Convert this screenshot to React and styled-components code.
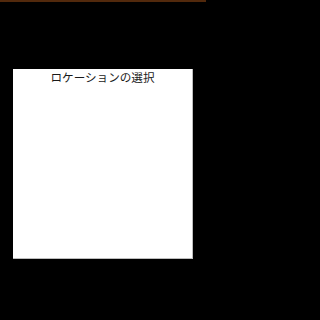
import React from 'react';
import styled, { createGlobalStyle } from 'styled-components';

const GlobalStyle = createGlobalStyle`
  html, body {
    margin: 0;
    padding: 0;
    background: #000;
  }
`;

const Screen = styled.div`
  display: flex;
  flex-direction: column;
  width: 206px;
  height: 320px;
  background: #000;
  overflow: hidden;
`;

const StatusStrip = styled.div`
  height: 2px;
  background: #52290c;
`;

const Backdrop = styled.div`
  flex: 1;
  display: flex;
  justify-content: center;
  padding-top: 67px;
`;

const Dialog = styled.div`
  box-sizing: border-box;
  width: 180px;
  height: 190px;
  background: #fff;
  border-right: 1px solid #bdbdbd;
  border-bottom: 1px solid #bdbdbd;
`;

const Title = styled.div`
  padding-top: 1px;
  text-align: center;
  font-family: "Noto Sans CJK JP", "Noto Sans", sans-serif;
  font-size: 11.6px;
  line-height: 15px;
  color: #1a1a1a;
`;

export default function App() {
  return (
    <Screen>
      <GlobalStyle />
      <StatusStrip />
      <Backdrop>
        <Dialog>
          <Title>ロケーションの選択</Title>
        </Dialog>
      </Backdrop>
    </Screen>
  );
}
